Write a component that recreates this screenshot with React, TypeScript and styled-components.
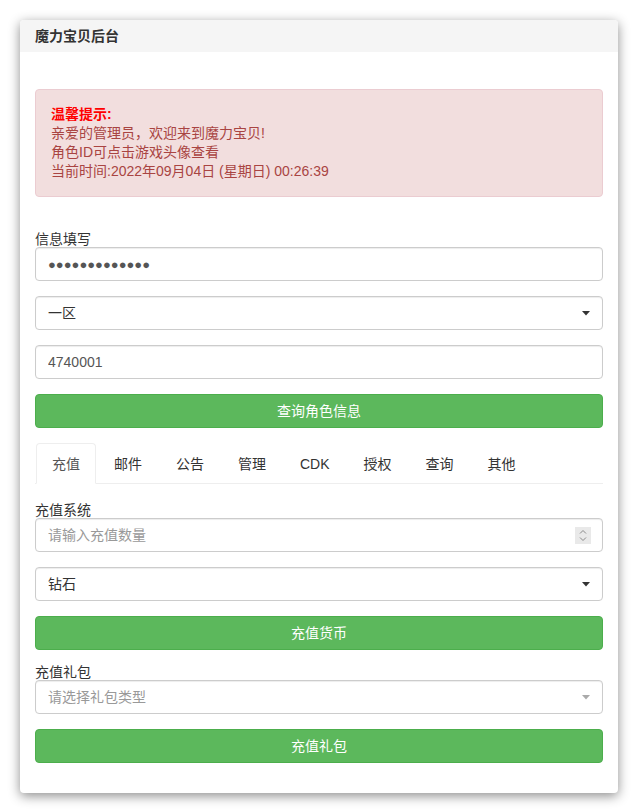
import * as React from 'react';
import styled, { createGlobalStyle } from 'styled-components';

const GlobalStyle = createGlobalStyle`
  html, body {
    margin: 0;
    padding: 0;
    background: #fff;
  }
  body {
    font-family: "Liberation Sans", "Noto Sans CJK SC", Arial, sans-serif;
    font-size: 14px;
    color: #333;
  }
  * {
    box-sizing: border-box;
  }
`;

const Page = styled.div`
  padding: 20px 20px 19px 20px;
`;

const Panel = styled.div`
  background: #fff;
  border-radius: 4px;
  box-shadow: 0 3px 12px rgba(0, 0, 0, 0.45);
  overflow: hidden;
`;

const PanelHeading = styled.div`
  background: #f5f5f5;
  padding: 6px 15px;
  line-height: 20px;
  font-size: 14px;
  font-weight: bold;
  color: #333;
`;

const PanelBody = styled.div`
  padding: 37px 15px 30px 15px;
`;

const Alert = styled.div`
  background: #f2dede;
  border: 1px solid #ebccd1;
  border-radius: 4px;
  color: #a94442;
  padding: 15px;
  line-height: 19px;
  font-size: 14px;
`;

const AlertTitle = styled.div`
  color: #ff0000;
  font-weight: bold;
`;

const Label = styled.label<{ $top: number }>`
  display: block;
  margin-top: ${(p) => p.$top}px;
  line-height: 15px;
  font-size: 14px;
  color: #333;
`;

const fieldBox = `
  display: flex;
  align-items: center;
  width: 100%;
  height: 34px;
  border: 1px solid #ccc;
  border-radius: 4px;
  background: #fff;
  box-shadow: inset 0 1px 1px rgba(0, 0, 0, 0.075);
`;

const Stack = styled.div`
  display: flex;
  flex-direction: column;
  gap: 15px;
`;

const TextInput = styled.input`
  ${fieldBox}
  padding: 6px 12px;
  font-family: inherit;
  font-size: 14px;
  color: #555;
  outline: none;
  &::placeholder {
    color: #999;
  }
`;

const Dots = styled(TextInput)`
  font-size: 13px;
  letter-spacing: 0;
  color: #555;
`;

const Shell = styled.div`
  ${fieldBox}
  padding: 0 12px 0 0;
`;

const InnerInput = styled.input`
  flex: 1;
  min-width: 0;
  height: 100%;
  border: none;
  background: transparent;
  padding: 6px 12px;
  font-family: inherit;
  font-size: 14px;
  color: #555;
  outline: none;
  &::placeholder {
    color: #999;
  }
`;

const InnerSelect = styled.select<{ $muted?: boolean }>`
  flex: 1;
  min-width: 0;
  height: 100%;
  border: none;
  background: transparent;
  padding: 6px 12px;
  font-family: inherit;
  font-size: 14px;
  color: ${(p) => (p.$muted ? '#999' : '#333')};
  appearance: none;
  outline: none;
`;

const Spinner = styled.div`
  width: 16px;
  height: 17px;
  background: #e9e9e9;
  display: flex;
  align-items: center;
  justify-content: center;
  margin-right: -1px;
`;

const Button = styled.button`
  display: block;
  width: 100%;
  height: 34px;
  background: #5cb85c;
  border: 1px solid #4cae4c;
  border-radius: 4px;
  color: #fff;
  font-family: inherit;
  font-size: 14px;
  line-height: 20px;
`;

const Tabs = styled.ul`
  display: flex;
  list-style: none;
  margin: 15px 0 0 0;
  padding: 0 0 0 1px;
  border-bottom: 1px solid #eee;
`;

const Tab = styled.li<{ $active?: boolean }>`
  margin: 0 2px -1px 0;
  padding: 10px 15px 9px;
  line-height: 20px;
  font-size: 14px;
  color: ${(p) => (p.$active ? '#555' : '#333')};
  background: ${(p) => (p.$active ? '#fff' : 'transparent')};
  border: 1px solid ${(p) => (p.$active ? '#eee' : 'transparent')};
  border-bottom-color: ${(p) => (p.$active ? '#fff' : 'transparent')};
  border-radius: 4px 4px 0 0;
`;

function Caret({ color = '#333' }: { color?: string }) {
  return (
    <svg width="8" height="5" viewBox="0 0 8 5">
      <path d="M0 0 L8 0 L4 4.5 Z" fill={color} />
    </svg>
  );
}

function SpinnerIcon() {
  return (
    <Spinner>
      <svg width="8" height="13" viewBox="0 0 8 13">
        <path d="M1 4.5 L4 1.5 L7 4.5" fill="none" stroke="#8a8a8a" strokeWidth="1" />
        <path d="M1 8.5 L4 11.5 L7 8.5" fill="none" stroke="#8a8a8a" strokeWidth="1" />
      </svg>
    </Spinner>
  );
}

const tabs = ['充值', '邮件', '公告', '管理', 'CDK', '授权', '查询', '其他'];

export default function App() {
  return (
    <Page>
      <GlobalStyle />
      <Panel>
        <PanelHeading>魔力宝贝后台</PanelHeading>
        <PanelBody>
          <Alert>
            <AlertTitle>温馨提示:</AlertTitle>
            <div>亲爱的管理员，欢迎来到魔力宝贝!</div>
            <div>角色ID可点击游戏头像查看</div>
            <div>当前时间:2022年09月04日 (星期日) 00:26:39</div>
          </Alert>

          <Label $top={35}>信息填写</Label>
          <Stack>
            <Dots type="text" readOnly value="●●●●●●●●●●●●●" />
            <Shell>
              <InnerSelect defaultValue="1">
                <option value="1">一区</option>
              </InnerSelect>
              <Caret />
            </Shell>
            <TextInput type="text" defaultValue="4740001" />
            <Button>查询角色信息</Button>
          </Stack>

          <Tabs>
            {tabs.map((t, i) => (
              <Tab key={t} $active={i === 0}>
                {t}
              </Tab>
            ))}
          </Tabs>

          <Label $top={19}>充值系统</Label>
          <Stack>
            <Shell>
              <InnerInput type="text" placeholder="请输入充值数量" />
              <SpinnerIcon />
            </Shell>
            <Shell>
              <InnerSelect defaultValue="diamond">
                <option value="diamond">钻石</option>
              </InnerSelect>
              <Caret />
            </Shell>
            <Button>充值货币</Button>
          </Stack>

          <Label $top={15}>充值礼包</Label>
          <Stack>
            <Shell>
              <InnerSelect defaultValue="" $muted>
                <option value="">请选择礼包类型</option>
              </InnerSelect>
              <Caret color="#aaa" />
            </Shell>
            <Button>充值礼包</Button>
          </Stack>
        </PanelBody>
      </Panel>
    </Page>
  );
}
